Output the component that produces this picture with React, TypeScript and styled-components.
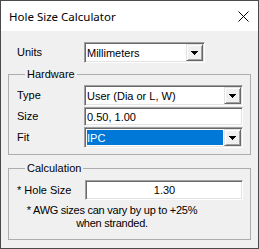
import styled, { createGlobalStyle } from "styled-components"

const GlobalStyle = createGlobalStyle`
    html, body {
        margin: 0;
        padding: 0;
        background: #ffffff;
    }
    * {
        box-sizing: border-box;
    }
`

type ComboProps = { value: string, selected?: boolean }

function ComboBox({ value, selected }: ComboProps){
    return (
        <Sunken $h={21}>
            <FieldText $selected={selected}>{value}</FieldText>
            <DropButton>
                <svg width="7" height="4" viewBox="0 0 7 4" shapeRendering="crispEdges">
                    <path d="M0 0h7v1h-1v1h-1v1h-1v1h-1v-1h-1v-1h-1v-1h-1z" fill="#000" />
                </svg>
            </DropButton>
        </Sunken>
    )
}

export default function App(){
    return (
        <>
            <GlobalStyle />
            <Window>
                <TitleBar>
                    <Title>Hole Size Calculator</Title>
                    <Close>
                        <svg width="11" height="11" viewBox="0 0 11 11">
                            <path d="M0.5 0.5L10.5 10.5M10.5 0.5L0.5 10.5" stroke="#000" strokeWidth="1" />
                        </svg>
                    </Close>
                </TitleBar>
                <Body>
                    <UnitsRow>
                        <Label>Units</Label>
                        <ComboBox value="Millimeters" />
                    </UnitsRow>

                    <Group $top={5} $bottom={6}>
                        <Legend>Hardware</Legend>
                        <Rows>
                            <Row>
                                <Label>Type</Label>
                                <ComboBox value="User (Dia or L, W)" />
                            </Row>
                            <Row>
                                <Label>Size</Label>
                                <Sunken $h={19}>
                                    <FieldText>0.50, 1.00</FieldText>
                                </Sunken>
                            </Row>
                            <Row>
                                <Label>Fit</Label>
                                <ComboBox value="IPC" selected />
                            </Row>
                        </Rows>
                    </Group>

                    <Group $top={7} $bottom={9}>
                        <Legend>Calculation</Legend>
                        <CalcRow>
                            <Label>* Hole Size</Label>
                            <Sunken $h={20}>
                                <FieldText $center>1.30</FieldText>
                            </Sunken>
                        </CalcRow>
                        <Note>
                            * AWG sizes can vary by up to +25%<br />
                            when stranded.
                        </Note>
                    </Group>
                </Body>
            </Window>
        </>
    )
}

const Window = styled.div`
    width: 259px;
    height: 249px;
    border: 1px solid #4a4a4a;
    display: flex;
    flex-direction: column;
    background: #f0f0f0;
`

const TitleBar = styled.div`
    height: 30px;
    background: #ffffff;
    display: flex;
    align-items: center;
    justify-content: space-between;
    padding: 0 9px 0 8px;
`

const Title = styled.span`
    font-family: "Noto Sans", sans-serif;
    font-size: 11.5px;
    color: #000;
    padding-top: 1px;
`

const Close = styled.span`
    display: flex;
    padding-top: 1px;
`

const Body = styled.div`
    flex: 1;
    padding: 11px 7px 0 7px;
    font-family: "Liberation Sans", Arial, sans-serif;
    font-size: 11px;
    color: #000;
`

const Label = styled.span`
    line-height: 13px;
    white-space: nowrap;
`

const UnitsRow = styled.div`
    display: grid;
    grid-template-columns: 67px 121px;
    align-items: center;
    padding-left: 9px;
`

const Group = styled.fieldset<{ $top: number, $bottom: number }>`
    margin: ${p => p.$top}px 0 0 0;
    padding: 0 7px ${p => p.$bottom}px 8px;
    border: 1px solid #adadad;
    min-width: 0;
`

const Legend = styled.legend`
    margin-left: 8px;
    padding: 0 2px;
    line-height: 13px;
    font-size: 11px;
`

const Rows = styled.div`
    display: flex;
    flex-direction: column;
    gap: 1px;
    padding-top: 4px;
`

const Row = styled.div`
    display: grid;
    grid-template-columns: 67px 1fr;
    align-items: center;
`

const CalcRow = styled.div`
    display: grid;
    grid-template-columns: 68px 1fr;
    align-items: center;
    padding-top: 5px;
`

const Sunken = styled.div<{ $h: number }>`
    height: ${p => p.$h}px;
    background: #ffffff;
    border: 1px solid;
    border-color: #a0a0a0 #ffffff #ffffff #a0a0a0;
    box-shadow: inset 1px 1px #696969, inset -1px -1px #e3e3e3;
    padding: 1px;
    display: flex;
    align-items: stretch;
`

const FieldText = styled.div<{ $selected?: boolean, $center?: boolean }>`
    flex: 1;
    display: flex;
    align-items: center;
    justify-content: ${p => p.$center ? "center" : "flex-start"};
    margin: ${p => p.$selected ? "1px" : "0"};
    padding-left: ${p => p.$selected ? "0" : "1px"};
    background: ${p => p.$selected ? "#0078d7" : "transparent"};
    color: ${p => p.$selected ? "#ffffff" : "#000000"};
    white-space: nowrap;
    overflow: hidden;
`

const DropButton = styled.div`
    width: 17px;
    background: #f0f0f0;
    border: 1px solid;
    border-color: #e3e3e3 #696969 #696969 #e3e3e3;
    box-shadow: inset 1px 1px #ffffff, inset -1px -1px #a0a0a0;
    display: flex;
    align-items: center;
    justify-content: center;
`

const Note = styled.div`
    width: 190px;
    margin-top: 4px;
    text-align: center;
    line-height: 13px;
    letter-spacing: -0.25px;
`
